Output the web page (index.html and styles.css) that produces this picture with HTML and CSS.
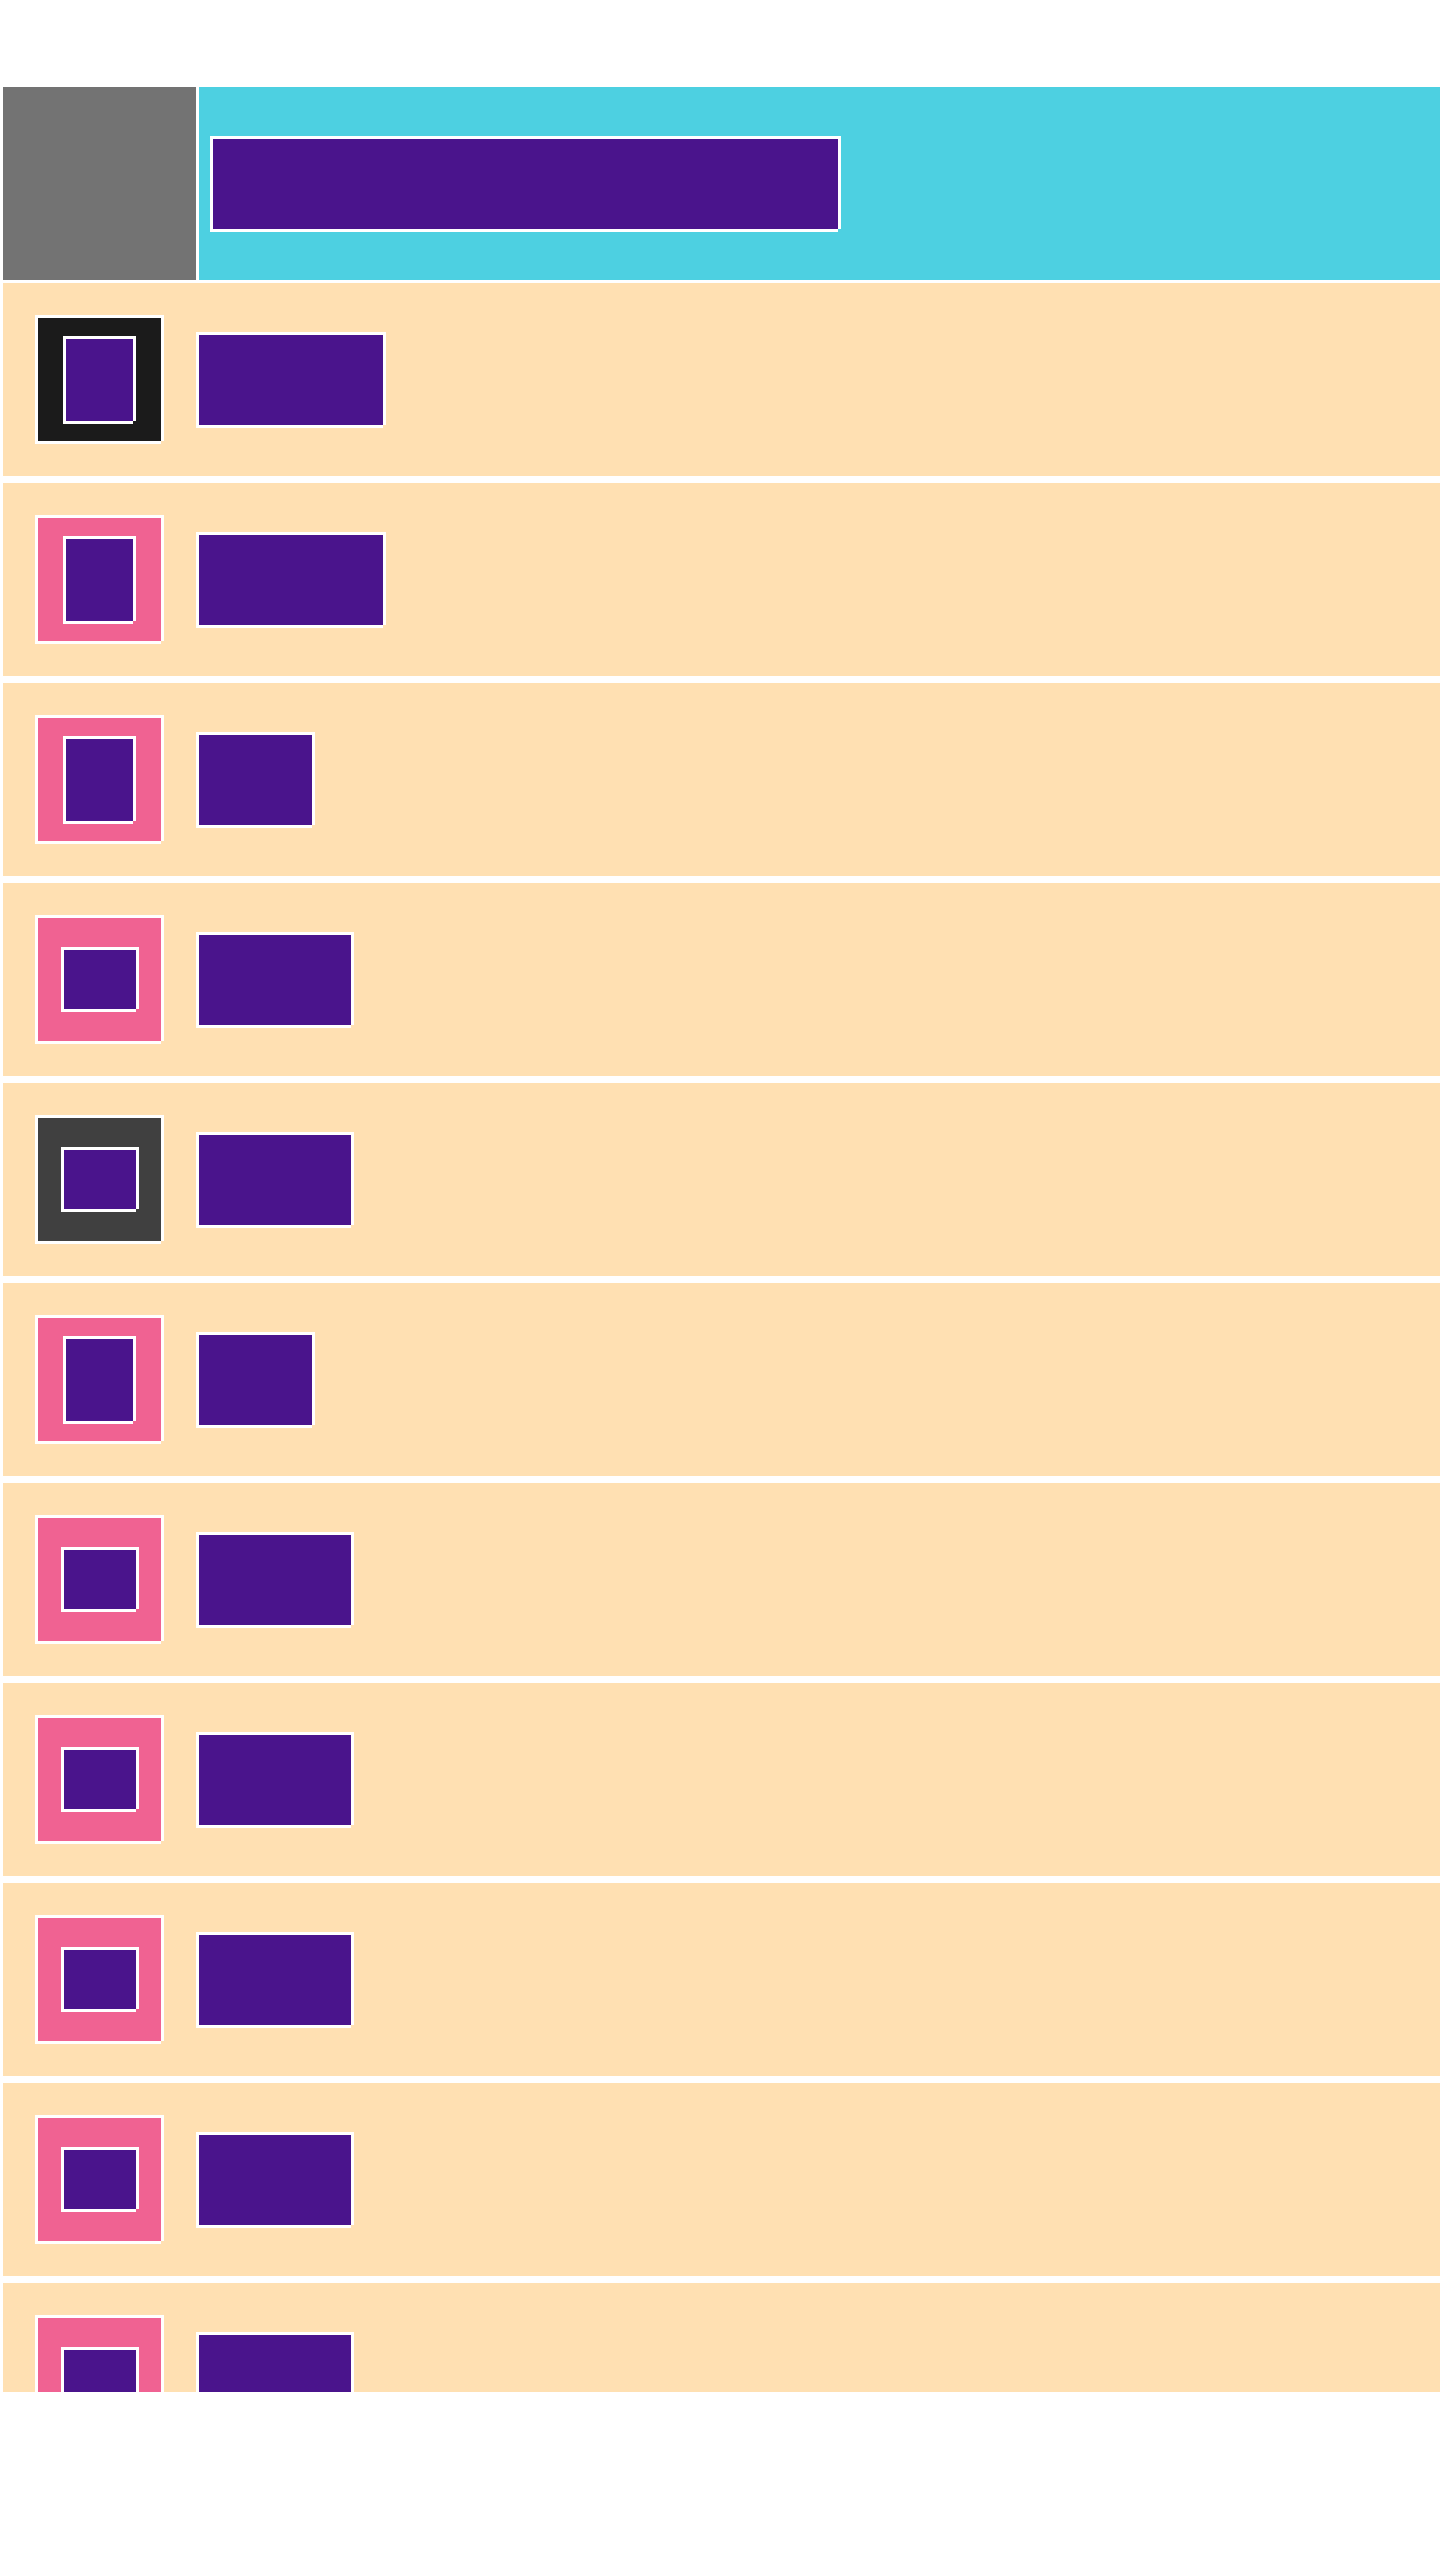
FILE: index.html
```html
<!DOCTYPE html>
<html lang="en">
<head>
<meta charset="utf-8">
<title>List</title>
<link rel="stylesheet" href="styles.css">
</head>
<body>
<div class="page">
  <header class="header">
    <div class="avatar"></div>
    <div class="title-area">
      <div class="box title"></div>
    </div>
  </header>
  <ul class="list">
    <li class="row"><div class="box icon icon-black"><div class="box glyph glyph-tall"></div></div><div class="box label label-l"></div></li>
    <li class="row"><div class="box icon icon-pink"><div class="box glyph glyph-tall"></div></div><div class="box label label-l"></div></li>
    <li class="row"><div class="box icon icon-pink"><div class="box glyph glyph-tall"></div></div><div class="box label label-s"></div></li>
    <li class="row"><div class="box icon icon-pink"><div class="box glyph glyph-wide"></div></div><div class="box label label-m"></div></li>
    <li class="row"><div class="box icon icon-dark"><div class="box glyph glyph-wide"></div></div><div class="box label label-m"></div></li>
    <li class="row"><div class="box icon icon-pink"><div class="box glyph glyph-tall"></div></div><div class="box label label-s"></div></li>
    <li class="row"><div class="box icon icon-pink"><div class="box glyph glyph-wide"></div></div><div class="box label label-m"></div></li>
    <li class="row"><div class="box icon icon-pink"><div class="box glyph glyph-wide"></div></div><div class="box label label-m"></div></li>
    <li class="row"><div class="box icon icon-pink"><div class="box glyph glyph-wide"></div></div><div class="box label label-m"></div></li>
    <li class="row"><div class="box icon icon-pink"><div class="box glyph glyph-wide"></div></div><div class="box label label-m"></div></li>
    <li class="row"><div class="box icon icon-pink"><div class="box glyph glyph-wide"></div></div><div class="box label label-m"></div></li>
  </ul>
</div>
</body>
</html>
```
FILE: styles.css
```css
html, body {
  margin: 0;
  padding: 0;
  background: #ffffff;
  font-family: "Roboto", "Liberation Sans", sans-serif;
}

.page {
  height: 2392px;
  overflow: hidden;
  box-sizing: border-box;
  padding-top: 87px;
}

/* box with a 3px white frame whose bottom-right corner is open */
.box {
  --fill: #4a148c;
  box-sizing: border-box;
  padding: 3px;
  flex: none;
  background:
    linear-gradient(var(--fill), var(--fill)) content-box,
    linear-gradient(#ffffff, #ffffff) 0 0 / 100% calc(100% - 3px) no-repeat,
    linear-gradient(#ffffff, #ffffff) 0 0 / calc(100% - 3px) 100% no-repeat;
}

.header {
  display: flex;
  gap: 3px;
  height: 193px;
  margin-left: 3px;
}

.avatar {
  width: 193px;
  flex: none;
  background: #737373;
}

.title-area {
  flex: 1;
  background: #4dd0e1;
  display: flex;
  align-items: center;
  padding-left: 11px;
}

.title {
  width: 631px;
  height: 96px;
}

.list {
  list-style: none;
  margin: 3px 0 0 3px;
  padding: 0;
  display: flex;
  flex-direction: column;
  gap: 7px;
}

.row {
  height: 193px;
  background: #ffe0b2;
  display: flex;
  align-items: center;
  gap: 32px;
  padding-left: 32px;
}

.icon {
  width: 129px;
  height: 129px;
  display: flex;
  align-items: center;
  justify-content: center;
}

.icon-black { --fill: #1b1b1b; }
.icon-dark { --fill: #404040; }
.icon-pink { --fill: #f06292; }

.glyph-tall {
  width: 73px;
  height: 88px;
}

.glyph-wide {
  width: 78px;
  height: 65px;
}

.label {
  height: 96px;
}

.label-l { width: 190px; }
.label-m { width: 158px; }
.label-s { width: 119px; }
```
